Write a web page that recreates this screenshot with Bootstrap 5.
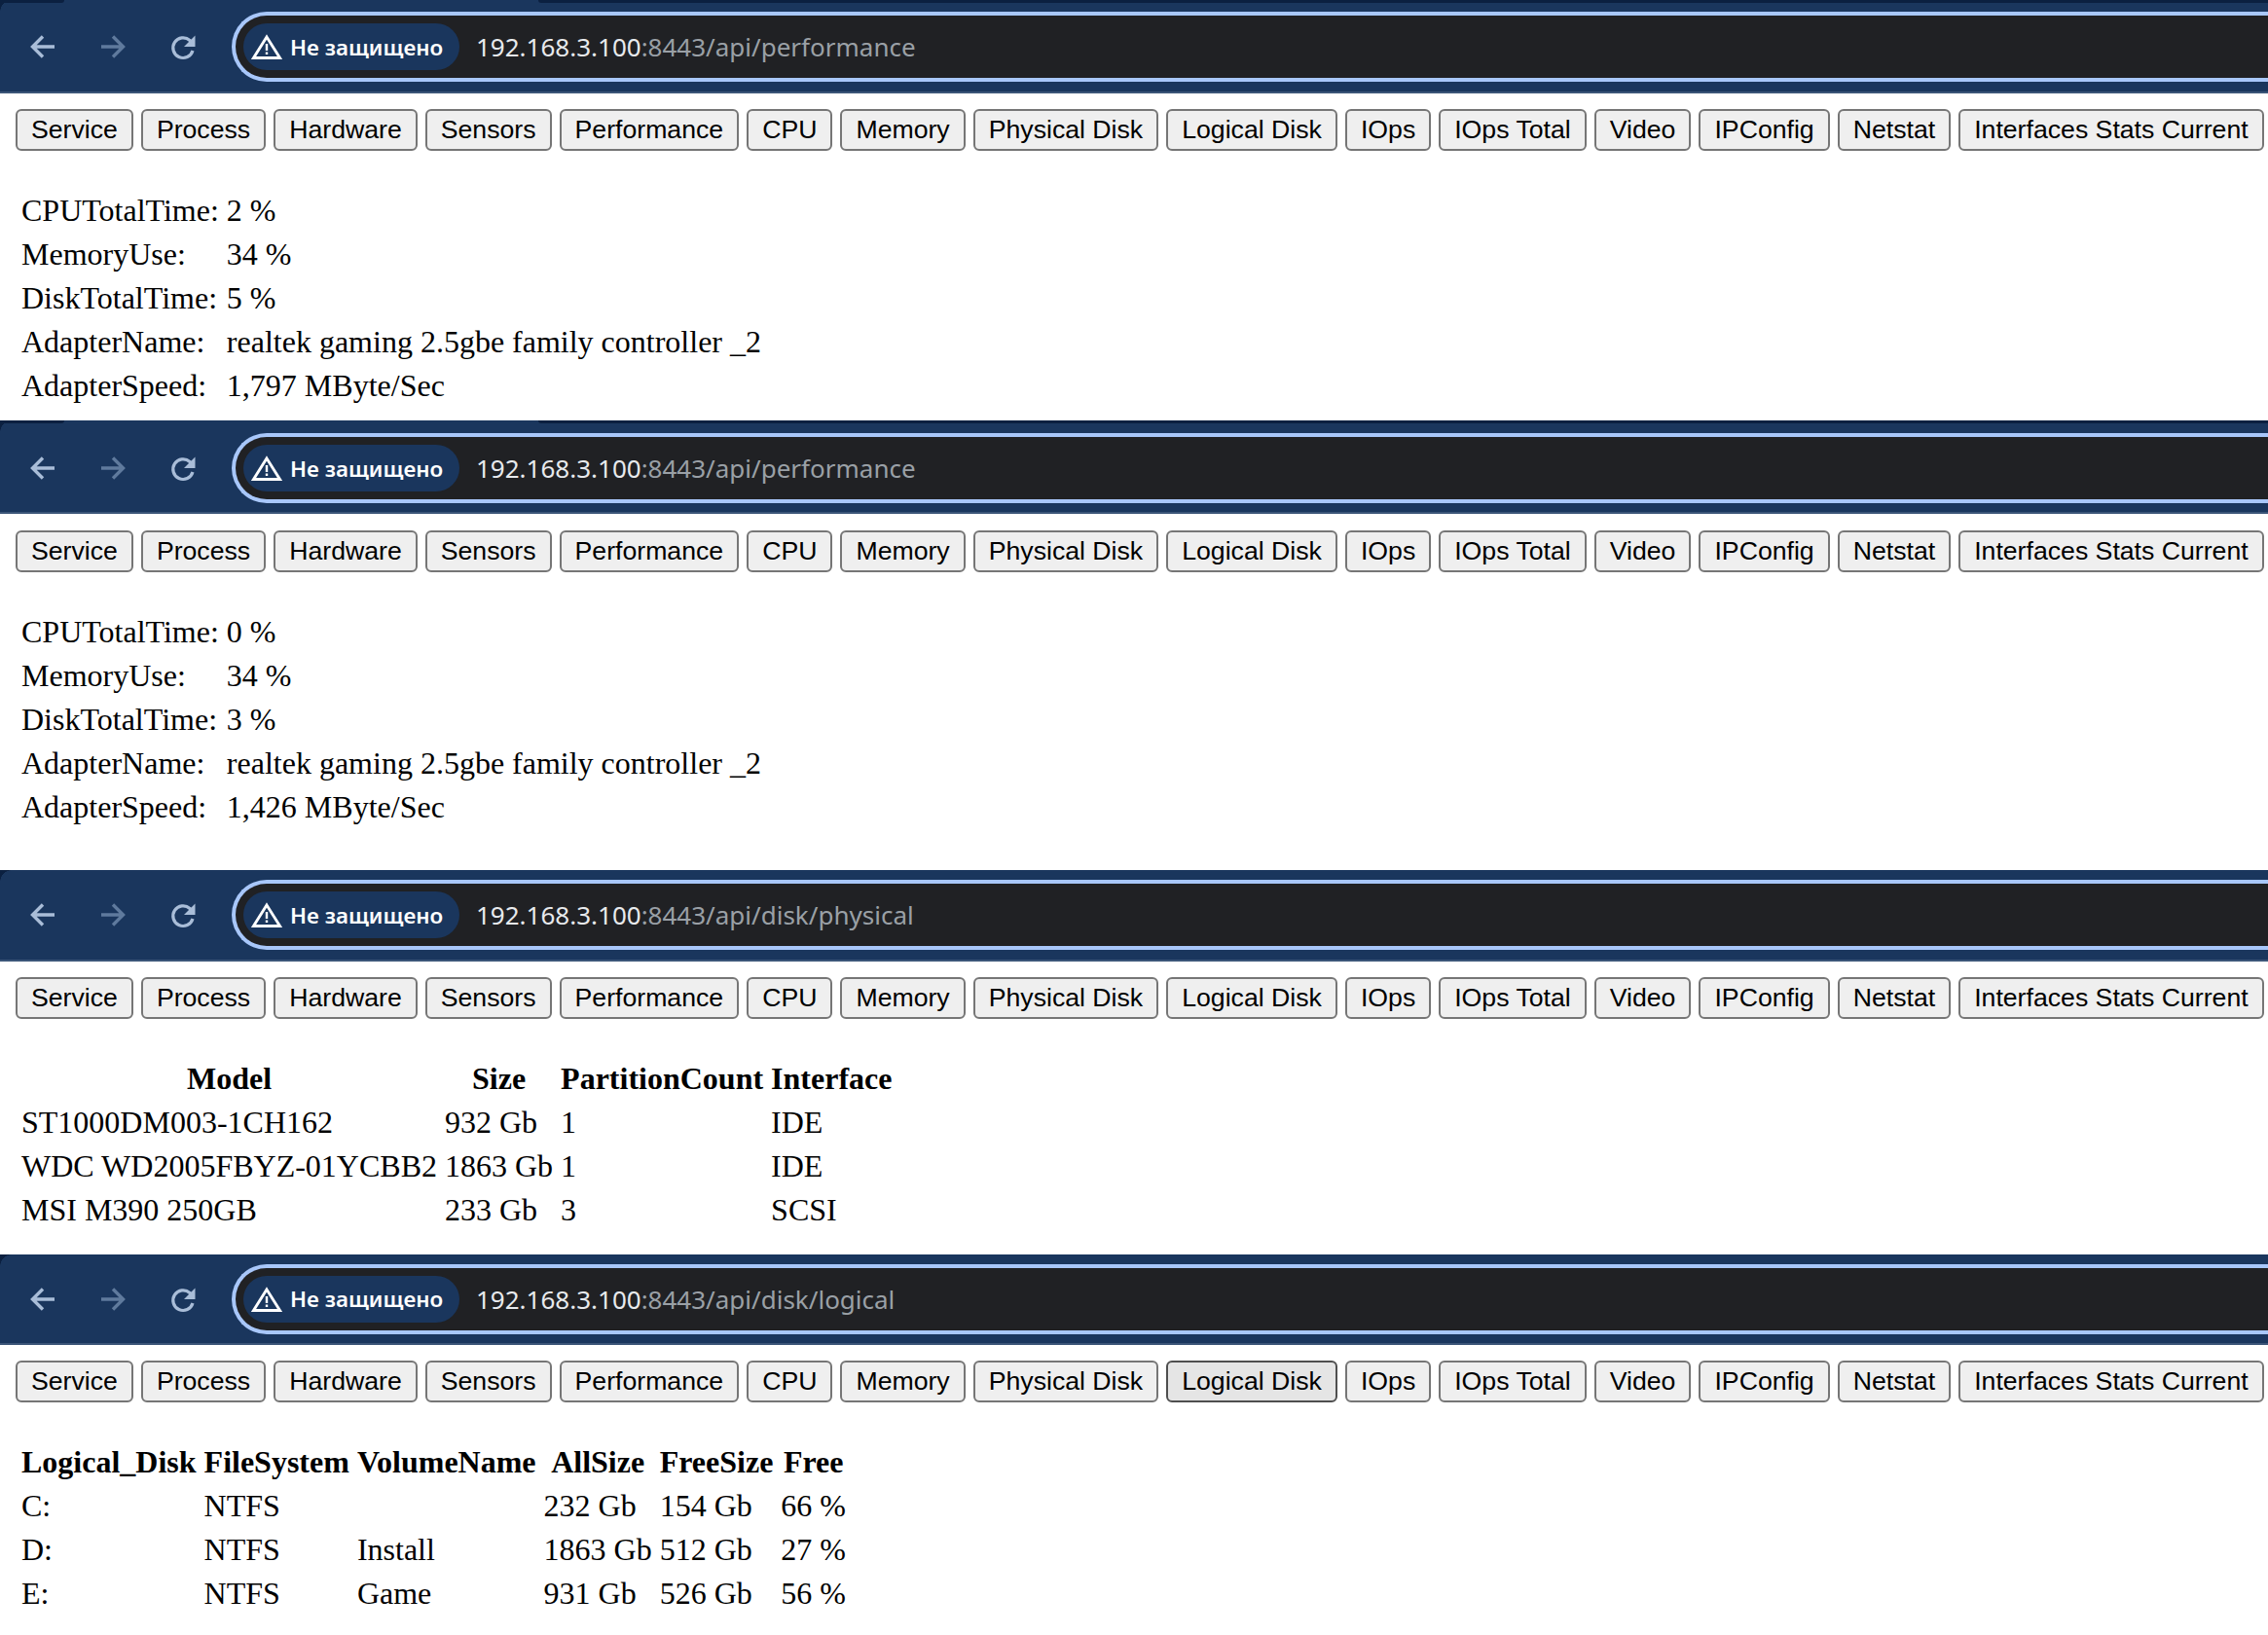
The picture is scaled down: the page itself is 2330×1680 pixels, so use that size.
<!DOCTYPE html>
<html lang="ru">
<head>
  <meta charset="UTF-8">
  <title>WinAPI</title>
  <meta name="viewport" content="width=device-width, initial-scale=1">
  <link href="https://cdn.jsdelivr.net/npm/bootstrap@5.3.3/dist/css/bootstrap.min.css" rel="stylesheet">
  <style>
    body {
      background-color: #fff;
      color: #000;
      font-family: "Liberation Serif", serif;
      font-size: 32px;
      line-height: normal;
    }
    .shot-perf-a { height: 432px; }
    .shot-perf-b { height: 462px; }
    .shot-phys { height: 395px; }
    .shot-logic { height: 391px; }
    .chrome-bar {
      height: 96px;
      background-color: #1a365d;
      border-bottom: 2px solid #3b5578;
    }
    .shot-perf-a .chrome-bar { padding-top: 2px; }
    .shot-perf-b .chrome-bar { padding-top: 4px; }
    .shot-phys .chrome-bar { height: 94px; }
    .shot-logic .chrome-bar { height: 93px; }
    .bar-corner {
      top: 0;
      left: 0;
      width: 12px;
      height: 12px;
      background: radial-gradient(circle at 12px 12px, transparent 11.5px, #0b2040 12px);
    }
    .tab-gap-left, .tab-gap-right {
      top: 0;
      height: 3px;
      background-color: #0b2040;
    }
    .tab-gap-left { left: 0; width: 66px; border-bottom-right-radius: 3px; }
    .tab-gap-right { left: 553px; right: 0; border-bottom-left-radius: 3px; }
    .nav-glyph { width: 72px; height: 48px; }
    .nav-glyph svg { width: 32px; height: 32px; }
    .nav-first { margin-left: 8px; }
    .nav-on { color: #a9bdd8; }
    .nav-off { color: #5f7a9d; }
    .addr-box {
      height: 72px;
      margin-left: 14px;
      background-color: #202124;
      border: 4px solid #a8c7fa;
      border-right: 0;
      border-radius: 36px 0 0 36px;
      padding-left: 8px;
      font-family: "Noto Sans", sans-serif;
    }
    .warn-chip {
      height: 48px;
      width: 222px;
      background-color: #1a365d;
      border-radius: 24px;
      color: #fff;
      font-family: "Noto Sans", sans-serif;
      font-size: 22.4px;
      font-weight: 600;
      padding-left: 8px;
    }
    .warn-chip svg { width: 32px; height: 32px; margin-right: 8px; }
    .addr-host { color: #e8eaed; font-size: 26px; margin-left: 17px; }
    .addr-rest { color: #9aa0a6; }
    .page-btns { padding: 16px 0 0 16px; }
    .raw-btn {
      height: 43px;
      padding: 0 14px;
      font-family: "Liberation Sans", sans-serif;
      font-size: 26.67px;
      line-height: 1;
      color: #000;
      background-color: #efefef;
      border: 2px solid #767676;
      border-radius: 6px;
      white-space: nowrap;
    }
    .raw-btn-hover { background-color: #e5e5e5; border-color: #4f4f4f; }
    .data-tbl {
      margin: 37px 0 0 16px;
      border-collapse: separate;
      border-spacing: 4px;
    }
    .data-tbl td, .data-tbl th { padding: 2px; }
    .data-tbl th { text-align: center; font-weight: 700; }
    .shot-perf-b .page-btns { padding-top: 17px; }
  </style>
</head>
<body>
  <div id="page"></div>

  <svg class="d-none">
    <symbol id="ic-back" viewBox="0 0 32 32"><path d="M28 16H7M16 5.500 5.500 16 16 26.500" fill="none" stroke="currentColor" stroke-width="3.400"/></symbol>
    <symbol id="ic-fwd" viewBox="0 0 32 32"><path d="M4 16h21M16 5.500 26.500 16 16 26.500" fill="none" stroke="currentColor" stroke-width="3.400"/></symbol>
    <symbol id="ic-reload" viewBox="0 0 32 32"><path d="M26 20a10.300 10.300 0 1 1-3-10.500l2.500 2.500" fill="none" stroke="currentColor" stroke-width="3.200"/><path d="M28.500 4.500v11.500H17z" fill="currentColor"/></symbol>
    <symbol id="ic-warn" viewBox="0 0 32 32"><path d="M16 6 29.500 27.500h-27z" fill="none" stroke="#fff" stroke-width="2.800" stroke-linejoin="miter"/><path d="M14.800 13h2.400v7h-2.400zM14.800 21.500h2.400v2.500h-2.400z" fill="#fff"/></symbol>
  </svg>

  <script>
    const btnNames = ['Service', 'Process', 'Hardware', 'Sensors', 'Performance', 'CPU', 'Memory', 'Physical Disk', 'Logical Disk', 'IOps', 'IOps Total', 'Video', 'IPConfig', 'Netstat', 'Interfaces Stats Current'];

    const shots = [
      { cls: 'shot-perf-a', strip: true, path: 'performance', rows: [['CPUTotalTime:', '2 %'], ['MemoryUse:', '34 %'], ['DiskTotalTime:', '5 %'], ['AdapterName:', 'realtek gaming 2.5gbe family controller _2'], ['AdapterSpeed:', '1,797 MByte/Sec']] },
      { cls: 'shot-perf-b', strip: true, path: 'performance', rows: [['CPUTotalTime:', '0 %'], ['MemoryUse:', '34 %'], ['DiskTotalTime:', '3 %'], ['AdapterName:', 'realtek gaming 2.5gbe family controller _2'], ['AdapterSpeed:', '1,426 MByte/Sec']] },
      { cls: 'shot-phys', path: 'disk/physical', head: ['Model', 'Size', 'PartitionCount', 'Interface'], rows: [['ST1000DM003-1CH162', '932 Gb', '1', 'IDE'], ['WDC WD2005FBYZ-01YCBB2', '1863 Gb', '1', 'IDE'], ['MSI M390 250GB', '233 Gb', '3', 'SCSI']] },
      { cls: 'shot-logic', path: 'disk/logical', hover: 'Logical Disk', head: ['Logical_Disk', 'FileSystem', 'VolumeName', 'AllSize', 'FreeSize', 'Free'], rows: [['C:', 'NTFS', '', '232 Gb', '154 Gb', '66 %'], ['D:', 'NTFS', 'Install', '1863 Gb', '512 Gb', '27 %'], ['E:', 'NTFS', 'Game', '931 Gb', '526 Gb', '56 %']] }
    ];

    function renderShot(s) {
      const btns = btnNames.map(n => `<button type="button" class="raw-btn${n === s.hover ? ' raw-btn-hover' : ''}">${n}</button>`).join('');
      const head = s.head ? `<tr>${s.head.map(h => `<th>${h}</th>`).join('')}</tr>` : '';
      const rows = s.rows.map(r => `<tr>${r.map(c => `<td>${c}</td>`).join('')}</tr>`).join('');
      const strip = s.strip ? '<span class="tab-gap-left position-absolute"></span><span class="tab-gap-right position-absolute"></span>' : '';
      return `
        <section class="${s.cls} overflow-hidden">
          <div class="chrome-bar position-relative d-flex align-items-center">
            <span class="bar-corner position-absolute"></span>${strip}
            <span class="nav-glyph nav-first nav-on d-flex align-items-center justify-content-center"><svg><use href="#ic-back"/></svg></span>
            <span class="nav-glyph nav-off d-flex align-items-center justify-content-center"><svg><use href="#ic-fwd"/></svg></span>
            <span class="nav-glyph nav-on d-flex align-items-center justify-content-center"><svg><use href="#ic-reload"/></svg></span>
            <div class="addr-box flex-grow-1 d-flex align-items-center">
              <span class="warn-chip d-inline-flex align-items-center"><svg><use href="#ic-warn"/></svg>Не защищено</span>
              <span class="addr-host">192.168.3.100<span class="addr-rest">:8443/api/${s.path}</span></span>
            </div>
          </div>
          <div class="page-btns d-flex gap-2">${btns}</div>
          <table class="data-tbl"><tbody>${head}${rows}</tbody></table>
        </section>`;
    }

    document.getElementById('page').innerHTML = shots.map(renderShot).join('');
  </script>
  <script src="https://cdn.jsdelivr.net/npm/bootstrap@5.3.3/dist/js/bootstrap.bundle.min.js"></script>
</body>
</html>
